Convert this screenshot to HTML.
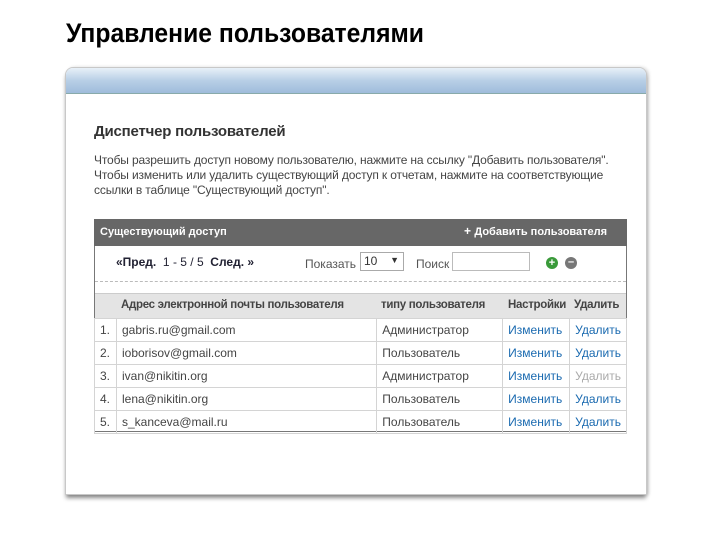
<!DOCTYPE html>
<html><head><meta charset="utf-8"><style>
*{margin:0;padding:0;box-sizing:border-box}
body{width:720px;height:540px;background:#fff;font-family:"Liberation Sans",Arial,sans-serif;position:relative;overflow:hidden;color:#333}
.abs{position:absolute}
.panel{left:65px;top:67px;width:582px;height:428px;background:#fff;border:1px solid #c8c8c8;border-radius:8px 8px 0 0;box-shadow:0 4px 4px -1px rgba(0,0,0,.45),2px 0 3px rgba(0,0,0,.15)}
.phead{left:0;top:0;width:100%;height:26px;border-radius:7px 7px 0 0;background:linear-gradient(#e8f0f8,#b8cfe6 50%,#9fbcdb);border-bottom:1px solid #8aa;}
.t{white-space:nowrap}
table{border-collapse:collapse;font-size:12px}
td{height:23px;border:1px solid #d4d4d4;padding:0 5px;color:#444;white-space:nowrap}
.a{color:#1a6ab0}
.h{font-size:11.5px;font-weight:bold;color:#444;letter-spacing:-0.3px}
</style></head><body>
<svg class="abs" style="left:0;top:0" width="720" height="60"><text x="66" y="42" font-family="Liberation Sans, sans-serif" font-size="27" font-weight="bold" textLength="358" lengthAdjust="spacingAndGlyphs" fill="#000">Управление пользователями</text></svg>
<div class="abs panel"><div class="abs phead"></div></div>
<div class="abs t" style="left:94px;top:123px;font-size:15px;font-weight:bold;color:#333;letter-spacing:-0.2px">Диспетчер пользователей</div>
<div class="abs t" style="left:94px;top:153px;font-size:12px;line-height:15px;color:#444;letter-spacing:-0.15px">Чтобы разрешить доступ новому пользователю, нажмите на ссылку "Добавить пользователя".<br>Чтобы изменить или удалить существующий доступ к отчетам, нажмите на соответствующие<br>ссылки в таблице "Существующий доступ".</div>
<div class="abs" style="left:94px;top:219px;width:533px;height:213px;border:1px solid #777"></div>
<div class="abs" style="left:94px;top:219px;width:533px;height:27px;background:#676767"></div>
<div class="abs t" style="left:100px;top:226px;font-size:11px;font-weight:bold;color:#fff">Существующий доступ</div>
<div class="abs t" style="left:464px;top:224px;font-size:12px;font-weight:bold;color:#fff">+ <span style="font-size:11px">Добавить пользователя</span></div>
<div class="abs t" style="left:116px;top:255px;font-size:12px;color:#223"><b>«Пред.</b>&nbsp; 1 - 5 / 5 &nbsp;<b>След. »</b></div>
<div class="abs t" style="left:305px;top:257px;font-size:12px;color:#555">Показать</div>
<div class="abs" style="left:360px;top:252px;width:44px;height:19px;border:1px solid #aaa;font-size:12px;padding:1px 3px">10<span style="position:absolute;right:4px;top:2px;font-size:9px">▼</span></div>
<div class="abs t" style="left:416px;top:257px;font-size:12px;color:#555">Поиск</div>
<div class="abs" style="left:452px;top:252px;width:78px;height:19px;border:1px solid #bbb"></div>
<div class="abs" style="left:546px;top:257px;width:12px;height:12px;border-radius:50%;background:#3a9a3a;color:#fff;font-size:11px;line-height:12px;text-align:center;font-weight:bold">+</div>
<div class="abs" style="left:565px;top:257px;width:12px;height:12px;border-radius:50%;background:#777;color:#fff;font-size:11px;line-height:11px;text-align:center;font-weight:bold">–</div>
<div class="abs" style="left:95px;top:281px;width:531px;border-top:1px dashed #bbb"></div>
<div class="abs" style="left:95px;top:293px;width:531px;height:25px;background:#e4e4e4;border-top:1px solid #ccc"></div>
<div class="abs t h" style="left:121px;top:299px">Адрес электронной почты пользователя</div>
<div class="abs t h" style="left:381px;top:299px">типу пользователя</div>
<div class="abs t h" style="left:508px;top:299px">Настройки</div>
<div class="abs t h" style="left:574px;top:299px">Удалить</div>
<table class="abs" style="left:94px;top:318px;width:533px">
<colgroup><col style="width:22px"><col style="width:261px"><col style="width:126px"><col style="width:67px"><col></colgroup>
<tr><td>1.</td><td>gabris.ru@gmail.com</td><td>Администратор</td><td class="a">Изменить</td><td class="a">Удалить</td></tr>
<tr><td>2.</td><td>ioborisov@gmail.com</td><td>Пользователь</td><td class="a">Изменить</td><td class="a">Удалить</td></tr>
<tr><td>3.</td><td>ivan@nikitin.org</td><td>Администратор</td><td class="a">Изменить</td><td style="color:#aaa">Удалить</td></tr>
<tr><td>4.</td><td>lena@nikitin.org</td><td>Пользователь</td><td class="a">Изменить</td><td class="a">Удалить</td></tr>
<tr><td>5.</td><td>s_kanceva@mail.ru</td><td>Пользователь</td><td class="a">Изменить</td><td class="a">Удалить</td></tr>
</table>
</body></html>
